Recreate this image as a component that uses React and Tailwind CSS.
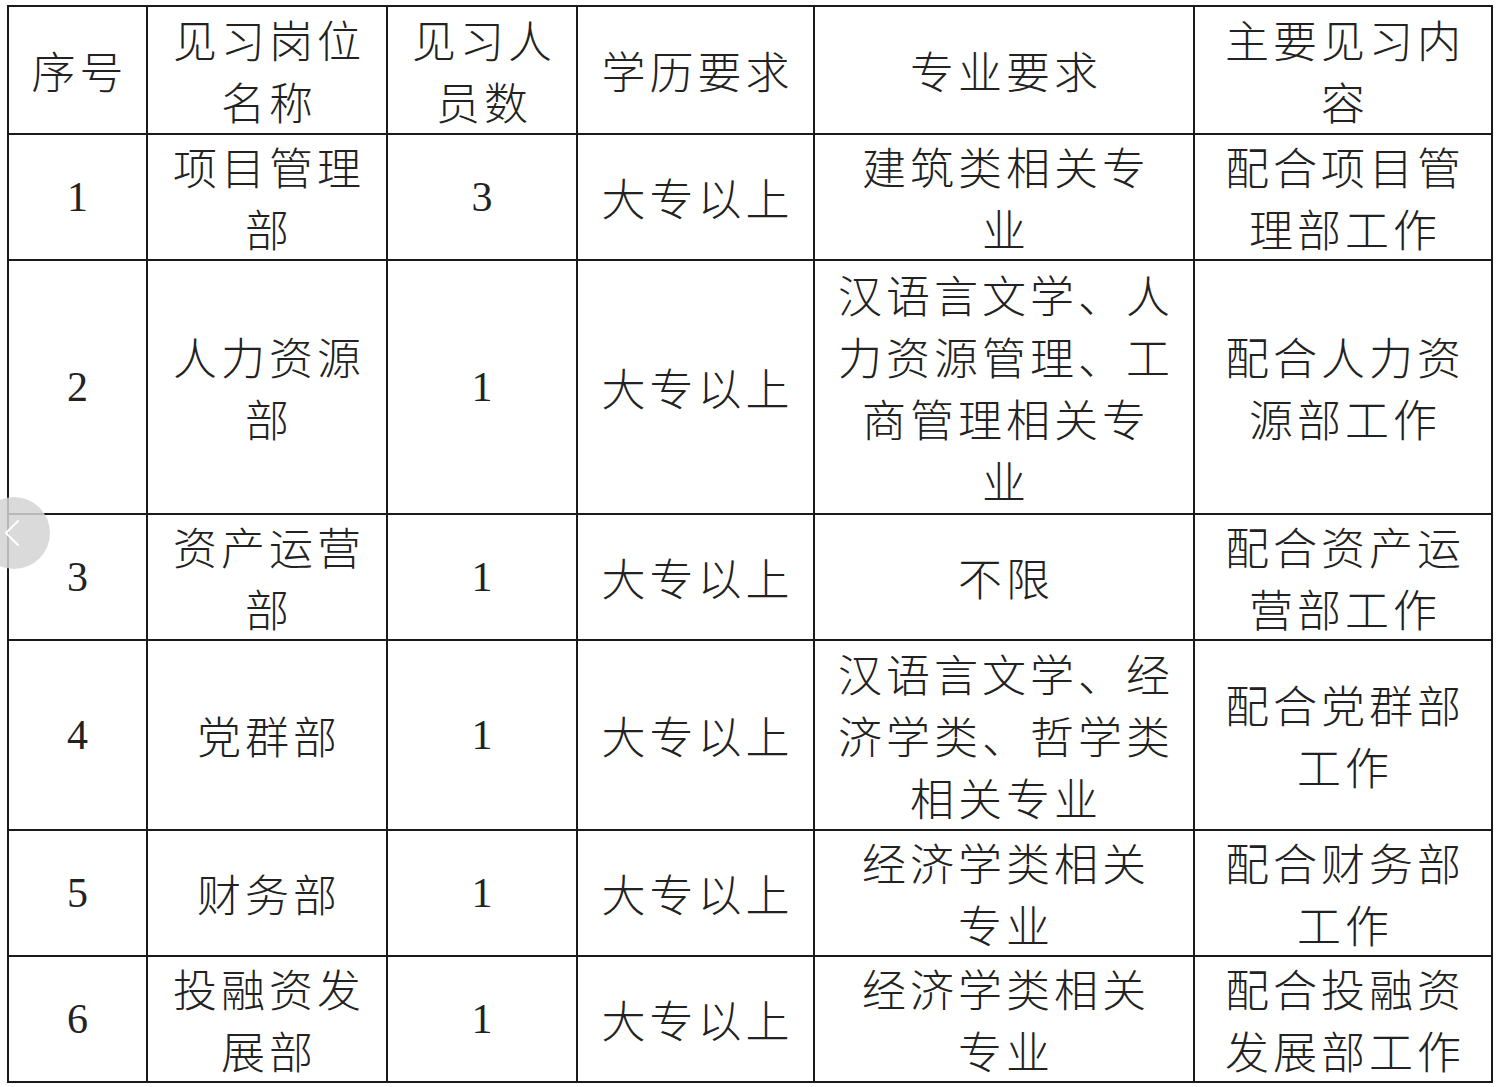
import React from 'react';

const rows = [
  ['1', ['项目管理', '部'], '3', ['大专以上'], ['建筑类相关专', '业'], ['配合项目管', '理部工作'], 126],
  ['2', ['人力资源', '部'], '1', ['大专以上'], ['汉语言文学、人', '力资源管理、工', '商管理相关专', '业'], ['配合人力资', '源部工作'], 254],
  ['3', ['资产运营', '部'], '1', ['大专以上'], ['不限'], ['配合资产运', '营部工作'], 126],
  ['4', ['党群部'], '1', ['大专以上'], ['汉语言文学、经', '济学类、哲学类', '相关专业'], ['配合党群部', '工作'], 190],
  ['5', ['财务部'], '1', ['大专以上'], ['经济学类相关', '专业'], ['配合财务部', '工作'], 126],
  ['6', ['投融资发', '展部'], '1', ['大专以上'], ['经济学类相关', '专业'], ['配合投融资', '发展部工作'], 126],
];

function Lines({ items }) {
  return items.map((t, i) => (
    <div key={i} className="whitespace-nowrap pl-[4px]">{t}</div>
  ));
}

function Cell({ children, num }) {
  return (
    <td
      className={
        'border-2 border-[#1a1a1a] text-center align-middle p-0 ' +
        (num
          ? "font-['Liberation_Serif',serif] text-[42px]"
          : "tracking-[4px] text-[44px] leading-[62px] font-light")
      }
    >
      {children}
    </td>
  );
}

export default function App() {
  return (
    <div className="relative w-[1506px] h-[1087px] bg-white overflow-hidden text-[#222] font-['Noto_Sans_CJK_SC','Liberation_Serif',serif]">
      <table className="table-fixed border-collapse ml-[7px] mt-[5px] w-[1484px]">
        <colgroup>
          <col className="w-[139px]" />
          <col className="w-[240px]" />
          <col className="w-[190px]" />
          <col className="w-[237px]" />
          <col className="w-[380px]" />
          <col className="w-[298px]" />
        </colgroup>
        <tbody>
          <tr className="h-[128px]">
            <Cell><Lines items={['序号']} /></Cell>
            <Cell><Lines items={['见习岗位', '名称']} /></Cell>
            <Cell><Lines items={['见习人', '员数']} /></Cell>
            <Cell><Lines items={['学历要求']} /></Cell>
            <Cell><Lines items={['专业要求']} /></Cell>
            <Cell><Lines items={['主要见习内', '容']} /></Cell>
          </tr>
          {rows.map((r) => (
            <tr key={r[0]} style={{ height: r[6] }}>
              <Cell num>{r[0]}</Cell>
              <Cell><Lines items={r[1]} /></Cell>
              <Cell num>{r[2]}</Cell>
              <Cell><Lines items={r[3]} /></Cell>
              <Cell><Lines items={r[4]} /></Cell>
              <Cell><Lines items={r[5]} /></Cell>
            </tr>
          ))}
        </tbody>
      </table>

      <div className="absolute left-[-22px] top-[497px] w-[72px] h-[72px] rounded-full bg-[#d4d4d4]/85 flex items-center justify-end pr-[30px]">
        <svg width="16" height="28" viewBox="0 0 16 28" fill="none">
          <path d="M14 2 L2 14 L14 26" stroke="white" strokeWidth="2" strokeLinecap="round" strokeLinejoin="round" />
        </svg>
      </div>
    </div>
  );
}
